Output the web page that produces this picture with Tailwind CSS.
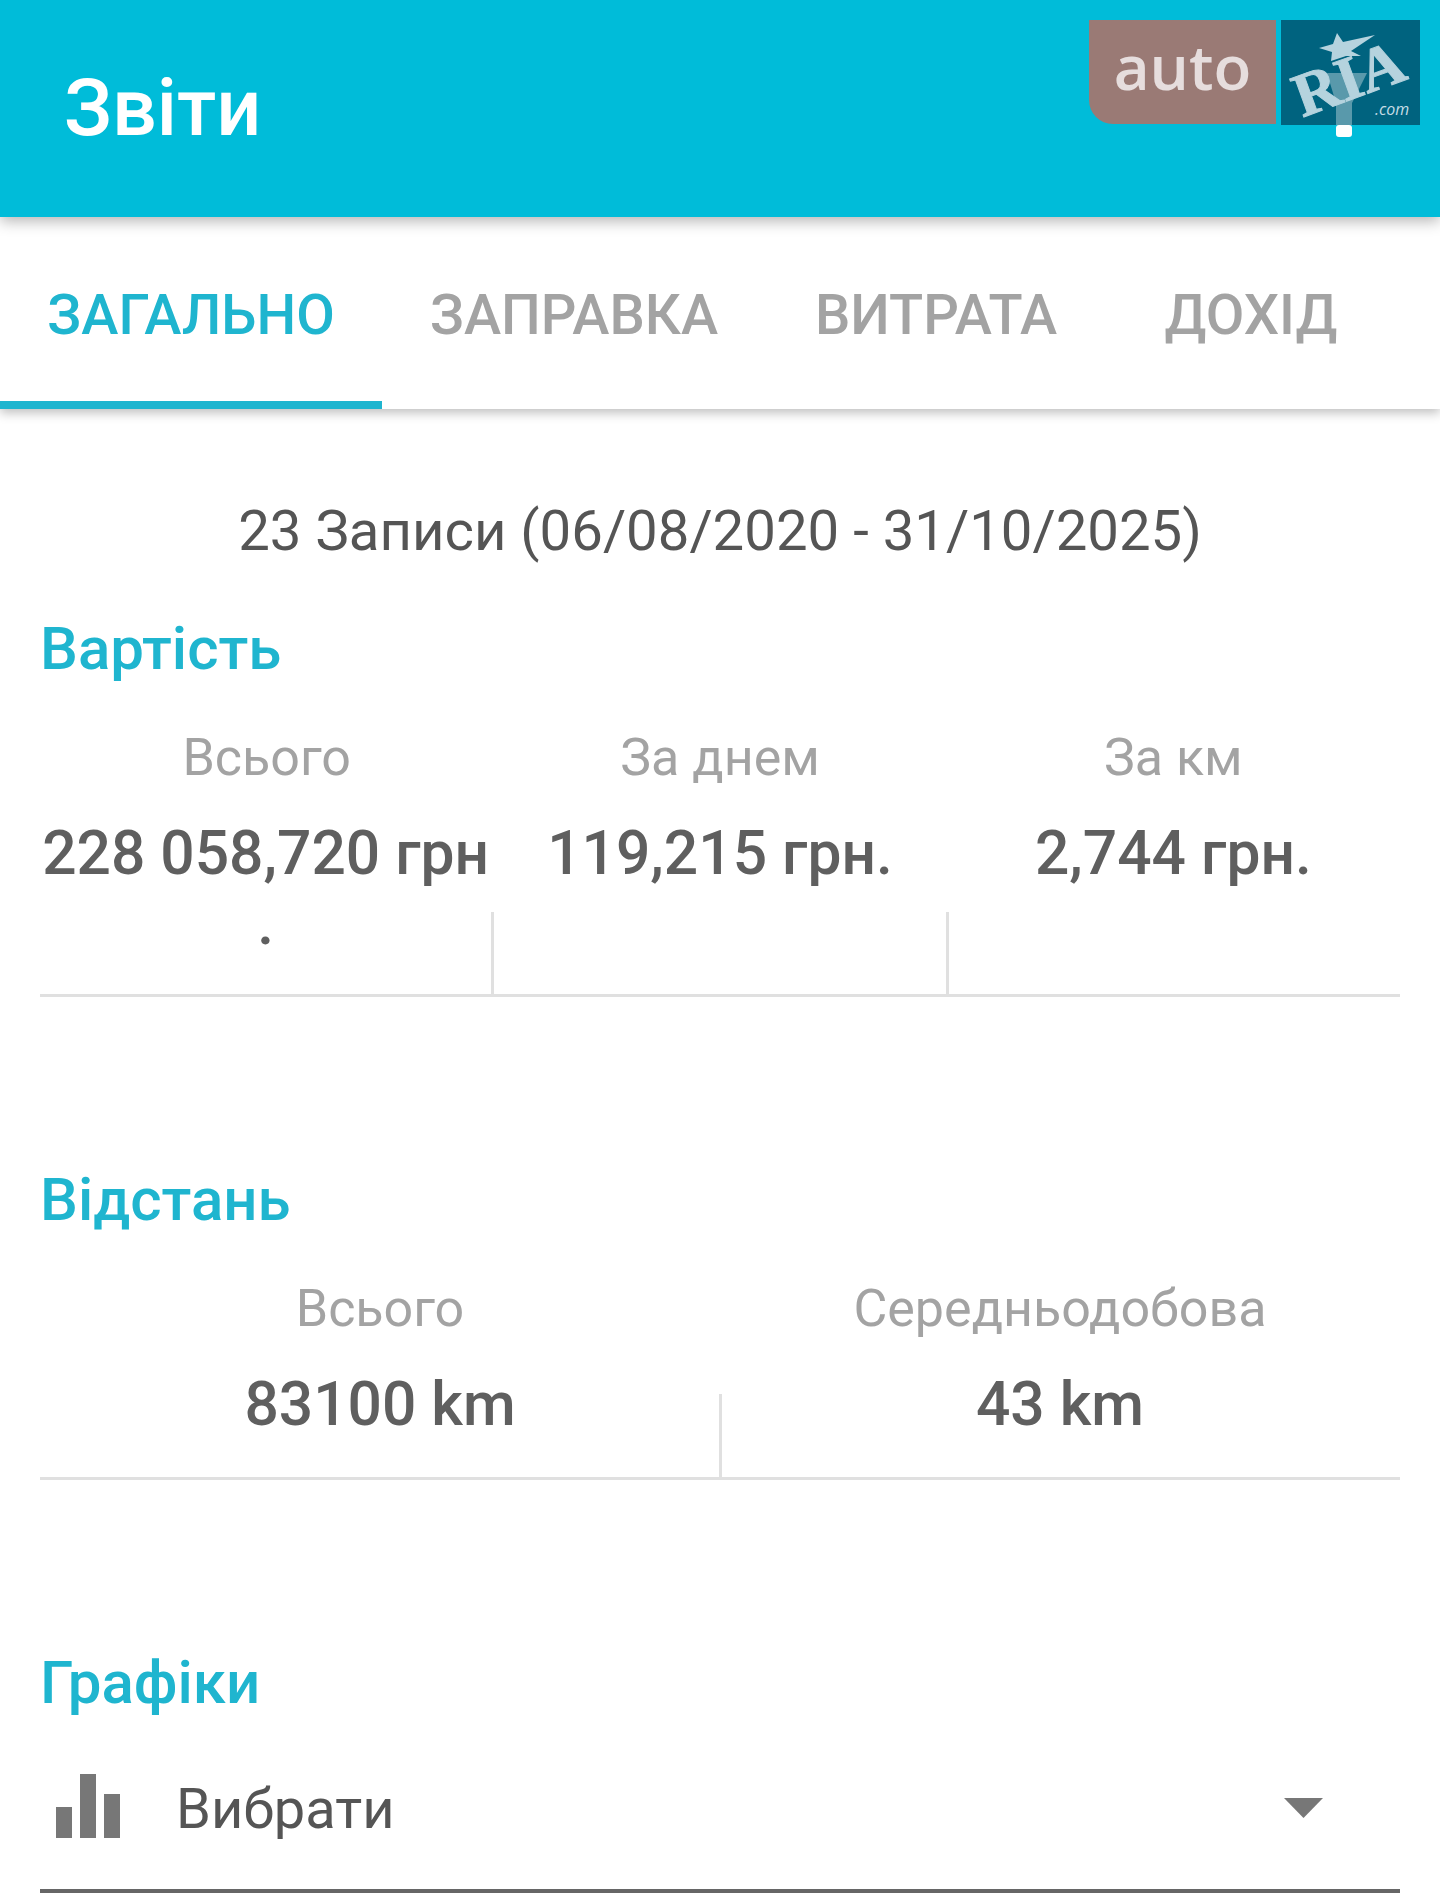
<!DOCTYPE html>
<html lang="uk">
<head>
    <meta charset="UTF-8">
    <meta name="viewport" content="width=device-width, initial-scale=1.0">
    <title>Звіти</title>
    <script src="https://cdn.jsdelivr.net/npm/@tailwindcss/browser@4"></script>
</head>
<body class="bg-white [font-family:Roboto,sans-serif] h-[1904px] overflow-hidden">

    <!-- Header -->
    <header class="relative z-20 h-[217px] bg-[#00bcd9] flex items-center pl-[64px] shadow-[0_4px_14px_rgba(0,0,0,0.3)]">
        <h1 class="text-[79px] font-medium text-white leading-none">Звіти</h1>

        <!-- Watermark -->
        <div class="absolute top-[20px] left-[1089px] flex gap-[5px]">
            <div class="w-[187px] h-[104px] bg-[#9a7a75] rounded-bl-[24px] flex justify-center items-center pb-[12px]">
                <span class="[font-family:'Open_Sans',sans-serif] text-[62px] font-semibold text-[#e6dddd] leading-none">auto</span>
            </div>
            <svg class="w-[139px] h-[105px] overflow-visible" viewBox="0 0 139 105">
                <rect width="139" height="105" fill="#00637f"/>
                <polygon points="46,53 86,53 71,83 71,105 55,105 55,83" fill="#ffffff" fill-opacity="0.35"/>
                <rect x="55" y="105" width="16" height="12" rx="3" fill="#ffffff"/>
                <polygon points="56,13 62,22 94,15 70,31 80,36 65,36 50,41 51,32 38,28 52,24" fill="#b5d3de"/>
                <text x="69" y="79" text-anchor="middle" transform="rotate(-20 69 62)" font-family="Liberation Serif" font-weight="700" font-size="62" stroke="#b5d3de" stroke-width="1" fill="#b5d3de">RIA</text>
                <text x="94" y="95" font-family="Open Sans" font-style="italic" font-size="16" fill="#c6dde6">.com</text>
            </svg>
        </div>
    </header>

    <!-- Tabs -->
    <nav class="relative z-10 h-[192px] bg-white flex text-[56px] font-medium text-[#a3a3a3] shadow-[0_4px_10px_rgba(0,0,0,0.25)]">
        <a class="w-[382px] flex items-center justify-center border-b-[8px] border-[#1fb5cf] text-[#1fb5cf] pt-[12px]">ЗАГАЛЬНО</a>
        <a class="w-[384px] flex items-center justify-center border-b-[8px] border-transparent pt-[12px]">ЗАПРАВКА</a>
        <a class="w-[340px] flex items-center justify-center border-b-[8px] border-transparent pt-[12px]">ВИТРАТА</a>
        <a class="w-[290px] flex items-center justify-center border-b-[8px] border-transparent pt-[12px]">ДОХІД</a>
    </nav>

    <main class="px-10">
        <p class="mt-[92px] text-center text-[56.3px] leading-[60px] text-[#555]">23 Записи (06/08/2020 - 31/10/2025)</p>

        <!-- Вартість -->
        <h2 class="mt-[58px] text-[60px] font-medium leading-[60px] text-[#1fb5cf]">Вартість</h2>
        <section class="relative grid grid-cols-3 mt-[49px] pb-[35px] border-b-[3px] border-[#e0e0e0] text-center">
            <div>
                <p class="text-[52px] leading-[60px] text-[#a3a3a3]">Всього</p>
                <p class="mt-[31px] text-[60.5px] font-medium leading-[70px] text-[#5f5f5f] pr-[2px]">228 058,720 грн<br>.</p>
            </div>
            <div>
                <p class="text-[52px] leading-[60px] text-[#a3a3a3]">За днем</p>
                <p class="mt-[31px] text-[60.5px] font-medium leading-[70px] text-[#5f5f5f]">119,215 грн.</p>
            </div>
            <div>
                <p class="text-[52px] leading-[60px] text-[#a3a3a3]">За км</p>
                <p class="mt-[31px] text-[60.5px] font-medium leading-[70px] text-[#5f5f5f]">2,744 грн.</p>
            </div>
            <span class="absolute left-[451px] bottom-0 w-[3px] h-[82px] bg-[#e0e0e0]"></span>
            <span class="absolute left-[906px] bottom-0 w-[3px] h-[82px] bg-[#e0e0e0]"></span>
        </section>

        <!-- Відстань -->
        <h2 class="mt-[173px] text-[60px] font-medium leading-[60px] text-[#1fb5cf]">Відстань</h2>
        <section class="relative grid grid-cols-2 mt-[49px] pb-[37px] border-b-[3px] border-[#e0e0e0] text-center">
            <div>
                <p class="text-[52px] leading-[60px] text-[#a3a3a3]">Всього</p>
                <p class="mt-[31px] text-[60.5px] font-medium leading-[70px] text-[#5f5f5f]">83100 km</p>
            </div>
            <div>
                <p class="text-[52px] leading-[60px] text-[#a3a3a3]">Середньодобова</p>
                <p class="mt-[31px] text-[60.5px] font-medium leading-[70px] text-[#5f5f5f]">43 km</p>
            </div>
            <span class="absolute left-[679px] bottom-0 w-[3px] h-[83px] bg-[#e0e0e0]"></span>
        </section>

        <!-- Графіки -->
        <h2 class="mt-[173px] text-[60px] font-medium leading-[60px] text-[#1fb5cf]">Графіки</h2>
        <div class="mt-[17px] h-[163px] flex items-center pl-[16px] pr-[77px] border-b-4 border-[#666]">
            <svg class="w-[64px] h-[64px] mr-[56px] mb-[8px]" viewBox="0 0 64 64" fill="#777777">
                <rect x="0" y="33" width="16" height="31"/>
                <rect x="24" y="0" width="16" height="64"/>
                <rect x="48" y="20" width="16" height="44"/>
            </svg>
            <span class="text-[56px] text-[#555] mb-[2px]">Вибрати</span>
            <svg class="ml-auto w-[39px] h-[20px] mb-[4px]" viewBox="0 0 39 20" fill="#777777">
                <polygon points="0,0 39,0 19.5,20"/>
            </svg>
        </div>
    </main>
</body>
</html>
